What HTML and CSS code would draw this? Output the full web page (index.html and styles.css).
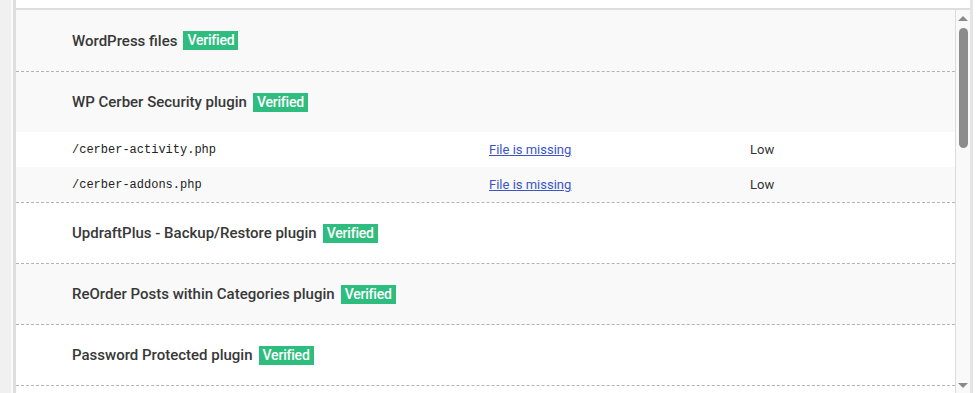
FILE: index.html
```html
<!DOCTYPE html>
<html>
<head>
<meta charset="utf-8">
<link rel="stylesheet" href="styles.css">
</head>
<body>
<div class="page">
  <div class="side"></div>
  <div class="box">
    <div class="box-top"></div>
    <div class="viewport">
      <div class="list">
        <div class="group shade">
          <div class="head first">WordPress files <span class="badge">Verified</span></div>
        </div>
        <div class="group">
          <div class="head shade">WP Cerber Security plugin <span class="badge">Verified</span></div>
          <div class="file">
            <span class="fname">/cerber-activity.php</span>
            <span><a href="#" class="flink">File is missing</a></span>
            <span class="sev">Low</span>
          </div>
          <div class="file shade">
            <span class="fname">/cerber-addons.php</span>
            <span><a href="#" class="flink">File is missing</a></span>
            <span class="sev">Low</span>
          </div>
        </div>
        <div class="group">
          <div class="head">UpdraftPlus - Backup/Restore plugin <span class="badge">Verified</span></div>
        </div>
        <div class="group shade">
          <div class="head">ReOrder Posts within Categories plugin <span class="badge">Verified</span></div>
        </div>
        <div class="group">
          <div class="head">Password Protected plugin <span class="badge">Verified</span></div>
        </div>
      </div>
      <div class="scrollbar">
        <div class="arrow up"></div>
        <div class="track"><div class="thumb"></div></div>
        <div class="arrow down"></div>
      </div>
    </div>
  </div>
  <div class="right"></div>
</div>
</body>
</html>
```

FILE: styles.css
```css
html, body {
  margin: 0;
  padding: 0;
  background: #fff;
  height: 393px;
  overflow: hidden;
  font-family: Roboto, "Liberation Sans", sans-serif;
  color: #333;
}
.page {
  display: flex;
  height: 393px;
}
.side {
  width: 11px;
  flex: none;
  background: #f0f0f0;
  border-right: 2px solid #fbfbfb;
}
.box {
  flex: 1;
  display: flex;
  flex-direction: column;
  border-left: 3px solid #dedede;
  border-right: 3px solid #e4e4e4;
  min-width: 0;
}
.box-top {
  height: 8px;
  flex: none;
  background: #fff;
  border-bottom: 2px solid #dedede;
}
.viewport {
  flex: 1;
  display: flex;
  min-height: 0;
  overflow: hidden;
}
.list {
  flex: 1;
  min-width: 0;
  background: #fff;
}
.shade {
  background: #f9f9f9;
}
.group {
  border-bottom: 1px dashed #b4b4b4;
}
.head {
  height: 60px;
  display: flex;
  align-items: center;
  padding-left: 56px;
  font-size: 15px;
  font-weight: 500;
  color: #383838;
}
.head.first {
  height: 61px;
}
.badge {
  display: inline-block;
  margin-left: 6px;
  background: #2ebd7e;
  color: #fff;
  font-size: 14px;
  font-weight: 500;
  line-height: 19px;
  padding: 0 4px;
  letter-spacing: -0.2px;
}
.file {
  height: 35px;
  display: grid;
  grid-template-columns: 417px 261px 1fr;
  align-items: center;
  padding-left: 56px;
  font-size: 13px;
}
.fname {
  font-family: "Liberation Mono", "DejaVu Sans Mono", monospace;
  font-size: 12px;
  color: #222;
}
.flink {
  color: #3a55c4;
  text-decoration: underline;
  font-size: 13px;
}
.sev {
  color: #333;
  font-size: 13px;
}
.scrollbar {
  width: 14px;
  flex: none;
  border-left: 1px solid #dcdcdc;
  background: #f9f9f9;
  display: flex;
  flex-direction: column;
  align-items: center;
}
.arrow {
  width: 0;
  height: 0;
  border-left: 5px solid transparent;
  border-right: 5px solid transparent;
  flex: none;
}
.arrow.up {
  margin-top: 6px;
  border-bottom: 5px solid #8a8a8a;
}
.arrow.down {
  margin-bottom: 5px;
  border-top: 5px solid #8a8a8a;
}
.track {
  flex: 1;
  width: 100%;
  display: flex;
  justify-content: center;
  padding-top: 7px;
}
.thumb {
  width: 9px;
  height: 120px;
  border-radius: 5px;
  background: #8c8c8c;
}
.right {
  width: 7px;
  flex: none;
  background: #fff;
}
```
